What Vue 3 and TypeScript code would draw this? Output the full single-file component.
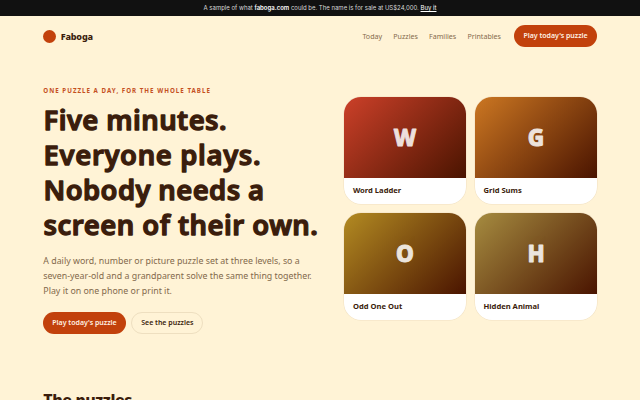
<script setup lang="ts">
interface Line { text: string; x: number; y: number; length: number }
interface Puzzle { letter: string; name: string; from: string }

const links: string[] = ['Today', 'Puzzles', 'Families', 'Printables']

const headline: Line[] = [
  { text: 'Five minutes.', x: 0.6, y: 30.9, length: 183 },
  { text: 'Everyone plays.', x: 0.6, y: 66, length: 217 },
  { text: 'Nobody needs a', x: 0.6, y: 101, length: 220.5 },
  { text: 'screen of their own.', x: 0.6, y: 136, length: 274.3 },
]

const puzzles: Puzzle[] = [
  { letter: 'W', name: 'Word Ladder', from: '#cc4029' },
  { letter: 'G', name: 'Grid Sums', from: '#cc7722' },
  { letter: 'O', name: 'Odd One Out', from: '#b38b22' },
  { letter: 'H', name: 'Hidden Animal', from: '#a68c40' },
]
</script>

<template>
  <div class="page">
    <div class="notice">
      <span>A sample of what <b>faboga.com</b> could be. The name is for sale at US$24,000. <a>Buy it</a></span>
    </div>

    <header class="header">
      <div class="brand"><i class="dot"></i><span>Faboga</span></div>
      <nav class="nav">
        <a v-for="link in links" :key="link">{{ link }}</a>
        <button class="btn primary">Play today's puzzle</button>
      </nav>
    </header>

    <section class="hero">
      <div class="copy">
        <p class="eyebrow">ONE PUZZLE A DAY, FOR THE WHOLE TABLE</p>
        <h1 class="headline">
          <svg width="290" height="150" viewBox="0 0 290 150">
            <text
              v-for="line in headline"
              :key="line.text"
              :x="line.x"
              :y="line.y"
              :textLength="line.length"
            >{{ line.text }}</text>
          </svg>
        </h1>
        <p class="lead">
          A daily word, number or picture puzzle set at three levels, so a<br />
          seven-year-old and a grandparent solve the same thing together.<br />
          Play it on one phone or print it.
        </p>
        <div class="actions">
          <button class="btn primary">Play today's puzzle</button>
          <button class="btn outline">See the puzzles</button>
        </div>
      </div>

      <div class="cards">
        <article v-for="p in puzzles" :key="p.name" class="card">
          <div class="art" :style="{ '--from': p.from }">
            <svg width="40" height="40" viewBox="0 0 40 40">
              <text x="20" y="27.5" text-anchor="middle">{{ p.letter }}</text>
            </svg>
          </div>
          <h3>{{ p.name }}</h3>
        </article>
      </div>
    </section>

    <section class="more">
      <h2>The puzzles</h2>
    </section>
  </div>
</template>

<style>
body {
  background: #fff3d6;
  overflow: hidden;
}
</style>

<style scoped>
.page {
  box-sizing: border-box;
  width: 640px;
  height: 400px;
  overflow: hidden;
  background: #fff3d6;
  color: #3b1d0c;
  font-family: 'Noto Sans', sans-serif;
}
.notice {
  display: flex;
  align-items: center;
  justify-content: center;
  height: 15.5px;
  background: #111;
  color: #d8d8d8;
  font: 6px/15px Inter, sans-serif;
}
.notice b {
  color: #fff;
  font-weight: 600;
}
.notice a {
  color: #fff;
  text-decoration: underline;
}
.header {
  display: flex;
  align-items: center;
  justify-content: space-between;
  height: 41px;
  padding: 0 43.3px;
}
.brand {
  display: flex;
  align-items: center;
  gap: 4.4px;
  font-size: 9.1px;
  font-weight: 800;
  letter-spacing: -0.2px;
}
.dot {
  width: 13px;
  height: 13px;
  border-radius: 50%;
  background: #c2410c;
}
.nav {
  display: flex;
  align-items: center;
  gap: 11.2px;
  color: #866b4d;
  font-size: 7.1px;
}
.btn {
  box-sizing: border-box;
  height: 21.6px;
  padding: 0 9px;
  border: 0;
  border-radius: 11px;
  font: 600 7px/20px 'Noto Sans', sans-serif;
  white-space: nowrap;
}
.primary {
  background: #c2410c;
  color: #fff2e4;
}
.nav .btn {
  margin-left: 2.2px;
}
.outline {
  border: 0.8px solid #eedfc0;
  background: transparent;
  color: #3b1d0c;
}
.hero {
  display: grid;
  grid-template-columns: 1fr 252.4px;
  padding: 30px 43.3px 0;
}
.eyebrow {
  margin: 0;
  color: #c4501f;
  font-size: 6.2px;
  font-weight: 700;
  line-height: 8px;
  letter-spacing: 1.01px;
  white-space: nowrap;
}
.headline {
  height: 150px;
  margin: 4.5px 0 0;
}
.headline svg {
  display: block;
}
.headline text {
  fill: #3b1d0c;
  stroke: #3b1d0c;
  stroke-width: 1.3px;
  stroke-linejoin: round;
  font-size: 27.4px;
  font-weight: 650;
}
.lead {
  margin: 5px 0 0;
  color: #836a4c;
  font-size: 8.83px;
  line-height: 14.9px;
  white-space: nowrap;
}
.actions {
  display: flex;
  gap: 5.6px;
  margin-top: 13.4px;
}
.cards {
  display: grid;
  grid-template-columns: 1fr 1fr;
  align-content: start;
  gap: 8.8px;
  padding-top: 10.5px;
}
.card {
  height: 107.3px;
  overflow: hidden;
  border-radius: 17px;
  background: #fff;
  box-shadow: 0 0 0 0.5px rgba(120, 70, 20, 0.1);
}
.art {
  display: flex;
  align-items: center;
  justify-content: center;
  height: 81px;
  background: linear-gradient(135deg, var(--from), #4a1400);
}
.art text {
  fill: #fff;
  stroke: #fff;
  stroke-width: 0.9px;
  stroke-linejoin: round;
  opacity: 0.85;
  font-size: 22.5px;
  font-weight: 800;
}
.card h3 {
  margin: 0;
  padding: 0 8.6px;
  font-size: 7.6px;
  font-weight: 700;
  line-height: 25px;
}
.more {
  padding: 55.5px 43.3px 0;
}
.more h2 {
  margin: 0;
  font-size: 16px;
  font-weight: 800;
  line-height: 22px;
  letter-spacing: -0.42px;
}
</style>
